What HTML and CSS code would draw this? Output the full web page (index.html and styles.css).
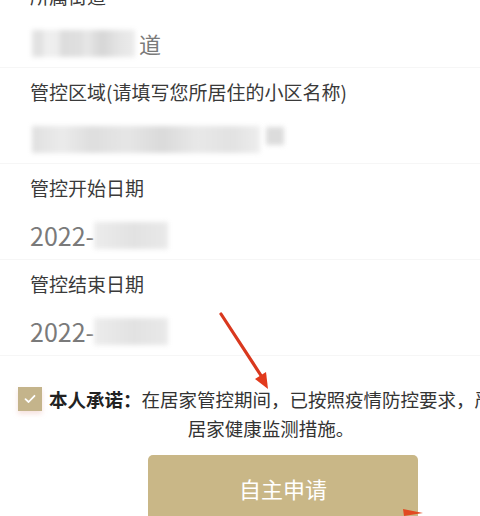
FILE: index.html
```html
<!DOCTYPE html>
<html lang="zh-CN">
<head>
    <meta charset="UTF-8">
    <meta name="viewport" content="width=device-width, initial-scale=1.0">
    <title>居家管控申请</title>
    <link rel="stylesheet" href="styles.css">
</head>
<body>
    <div class="page">
        <!-- Form fields -->
        <div class="form">
            <div class="field">
                <div class="label">所属街道</div>
                <div class="value">
                    <span class="blur blur-street"></span><span class="text">道</span>
                </div>
            </div>
            <div class="field">
                <div class="label">管控区域(请填写您所居住的小区名称)</div>
                <div class="value">
                    <span class="blur blur-area"></span><span class="blur blur-tail"></span>
                </div>
            </div>
            <div class="field">
                <div class="label">管控开始日期</div>
                <div class="value">
                    <span class="text">2022-</span><span class="blur blur-date"></span>
                </div>
            </div>
            <div class="field">
                <div class="label">管控结束日期</div>
                <div class="value">
                    <span class="text">2022-</span><span class="blur blur-date"></span>
                </div>
            </div>
        </div>

        <!-- Promise -->
        <div class="consent">
            <div class="checkbox">
                <svg width="14" height="14" viewBox="0 0 14 14"><path d="M2.5 7.2 L5.6 10 L11.5 3.8" fill="none" stroke="#fff" stroke-width="1.8" stroke-linecap="round" stroke-linejoin="round"/></svg>
            </div>
            <div class="consent-text">
                <b>本人承诺：</b>在居家管控期间，已按照疫情防控要求，严<br>居家健康监测措施。
            </div>
        </div>

        <div class="actions">
            <button class="submit">自主申请</button>
        </div>

        <!-- Annotation arrows -->
        <svg class="arrows" width="480" height="516" viewBox="0 0 480 516">
            <line x1="221" y1="314" x2="262" y2="377" stroke="#d9381e" stroke-width="3.2" stroke-linecap="round"/>
            <polygon points="268,389 255,379 266,372" fill="#e23a1c"/>
            <polygon points="403,509 423,513 404,516" fill="#e24a22"/>
        </svg>
    </div>
</body>
</html>
```

FILE: styles.css
```css
body {
    margin: 0;
    background-color: #ffffff;
    font-family: "Noto Sans CJK SC", "Noto Sans", sans-serif;
    overflow: hidden;
}

.page {
    position: relative;
    width: 480px;
    height: 516px;
    overflow: hidden;
}

.form {
    margin-top: -28px;
}

.field {
    padding-left: 30px;
    border-bottom: 1px solid #f6f6f6;
}

.label {
    height: 48px;
    line-height: 48px;
    font-size: 19px;
    color: #3a3a3a;
    white-space: nowrap;
}

.value {
    height: 47px;
    display: flex;
    align-items: center;
}

.value .text {
    font-size: 25px;
    color: #7a7a7a;
    line-height: 47px;
}

.field:first-child .value .text {
    font-size: 22px;
    margin-left: 4px;
}

.blur {
    display: inline-block;
    height: 27px;
    filter: blur(2.5px);
}

.blur-street {
    width: 103px;
    margin-left: 2px;
    background: linear-gradient(90deg, #e2e2e2 0, #e2e2e2 12px, #f0f0f0 12px, #ececec 28px, #dcdcdc 28px, #e0e0e0 52px, #eaeaea 52px, #d6d6d6 70px, #e4e4e4 86px, #ececec 103px);
}

.blur-area {
    width: 228px;
    margin-left: 2px;
    background: linear-gradient(90deg, #e0e0e0 0, #ebebeb 30px, #dedede 60px, #e6e6e6 95px, #dadada 130px, #e8e8e8 165px, #e2e2e2 200px, #ededed 228px);
}

.blur-tail {
    width: 18px;
    height: 18px;
    margin-left: 6px;
    margin-top: -8px;
    background-color: #dcdcdc;
}

.blur-date {
    width: 74px;
    background: linear-gradient(90deg, #ececec 0, #e2e2e2 40px, #e9e9e9 74px);
}

.consent {
    display: flex;
    align-items: flex-start;
    margin-top: 29px;
    padding-left: 18px;
}

.checkbox {
    flex: none;
    width: 24px;
    height: 24px;
    margin-top: 2px;
    margin-right: 6px;
    background-color: #c4b48b;
    display: flex;
    align-items: center;
    justify-content: center;
    box-shadow: 0 3px 5px rgba(230, 170, 160, 0.35);
}

.consent-text {
    flex: none;
    width: 446px;
    text-align: center;
    font-size: 18.5px;
    line-height: 29px;
    color: #333333;
    white-space: nowrap;
}

.consent-text b {
    color: #222222;
}

.actions {
    padding-left: 148px;
    margin-top: 12px;
}

.submit {
    width: 270px;
    height: 66px;
    border: none;
    border-radius: 5px;
    background-color: #c9b787;
    color: #ffffff;
    font-family: inherit;
    font-size: 22px;
    padding-bottom: 2px;
}

.arrows {
    position: absolute;
    left: 0;
    top: 0;
    pointer-events: none;
}
```
